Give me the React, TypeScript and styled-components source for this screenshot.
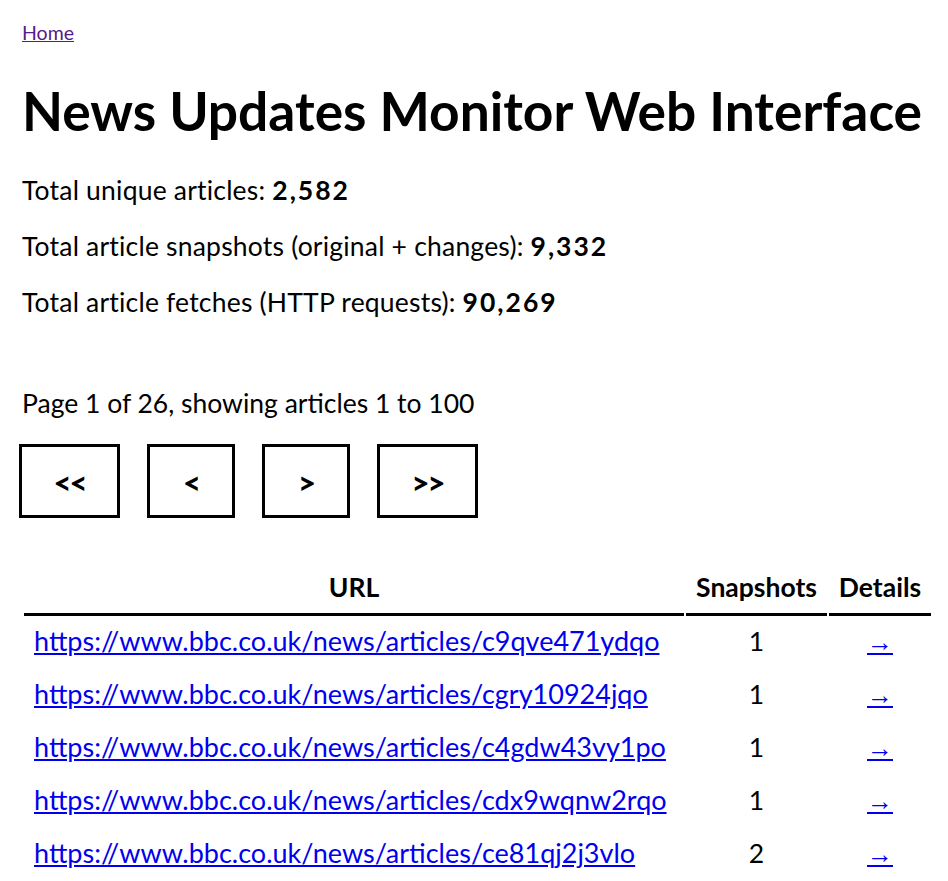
import React from "react";
import styled, { createGlobalStyle } from "styled-components";

const GlobalStyle = createGlobalStyle`
  html, body { margin: 0; padding: 0; background: #ffffff; }
  body {
    font-family: Lato, "Open Sans", sans-serif;
    color: #000000;
    font-size: 26.5px;
  }
`;

const Page = styled.main`
  padding: 21px 8px 40px 22px;
  display: flex;
  flex-direction: column;
  align-items: flex-start;
`;

const HomeLink = styled.a`
  font-size: 19.5px;
  line-height: 24px;
  color: #551a8b;
  text-decoration: underline;
`;

const Title = styled.h1`
  margin: 33px 0 0 0;
  font-size: 53.3px;
  line-height: 64px;
  font-weight: 700;
`;

const Stats = styled.div`
  margin-top: 32px;
  display: flex;
  flex-direction: column;
  gap: 24px;
`;

const Stat = styled.p`
  margin: 0;
  line-height: 32px;
  letter-spacing: 0.2px;
`;

const Value = styled.strong`
  font-weight: 700;
  letter-spacing: 2px;
`;

const PageInfo = styled.p`
  margin: 69px 0 0 0;
  line-height: 32px;
`;

const Pager = styled.nav`
  margin: 25px 0 0 -3px;
  display: flex;
  gap: 27px;
`;

const PagerButton = styled.a<{ $wide?: boolean }>`
  box-sizing: border-box;
  height: 74px;
  width: ${(p) => (p.$wide ? "101px" : "88px")};
  border: 3px solid #000000;
  background: #ffffff;
  display: flex;
  align-items: center;
  justify-content: center;
  font-weight: 900;
  font-size: 31px;
  color: #000000;
  text-decoration: none;
  letter-spacing: -2px;
  padding-top: 2px;
`;

const Table = styled.table`
  margin: 43px 0 0 0;
  width: 911px;
  border-collapse: separate;
  border-spacing: 2px;
  table-layout: fixed;
`;

const HeadCell = styled.th<{ $w: number }>`
  width: ${(p) => p.$w}px;
  box-sizing: border-box;
  padding: 8px 4px 10px 4px;
  line-height: 32px;
  font-weight: 700;
  text-align: center;
  border-bottom: 3px solid #000000;
  white-space: nowrap;
`;

const Cell = styled.td<{ $align?: string }>`
  height: 50px;
  box-sizing: border-box;
  padding: 7px 10px 11px 10px;
  font-size: 26.5px;
  line-height: 32px;
  text-align: ${(p) => p.$align || "center"};
  white-space: nowrap;
  vertical-align: top;
`;

const UrlLink = styled.a`
  color: #0000ee;
  text-decoration: underline;
  font-size: 27px;
  line-height: 32px;
`;

const ArrowLink = styled.a`
  color: #0000ee;
  text-decoration: underline;
  font-family: "Liberation Sans", sans-serif;
  font-size: 26px;
  line-height: 32px;
`;

const rows = [
  { id: "c9qve471ydqo", n: 1 },
  { id: "cgry10924jqo", n: 1 },
  { id: "c4gdw43vy1po", n: 1 },
  { id: "cdx9wqnw2rqo", n: 1 },
  { id: "ce81qj2j3vlo", n: 2 },
];

export default function App() {
  return (
    <>
      <GlobalStyle />
      <Page>
        <HomeLink href="#">Home</HomeLink>
        <Title>News Updates Monitor Web Interface</Title>
        <Stats>
          <Stat>
            Total unique articles: <Value>2,582</Value>
          </Stat>
          <Stat>
            Total article snapshots (original + changes): <Value>9,332</Value>
          </Stat>
          <Stat>
            Total article fetches (HTTP requests): <Value>90,269</Value>
          </Stat>
        </Stats>
        <PageInfo>Page 1 of 26, showing articles 1 to 100</PageInfo>
        <Pager>
          <PagerButton $wide href="#">&lt;&lt;</PagerButton>
          <PagerButton href="#">&lt;</PagerButton>
          <PagerButton href="#">&gt;</PagerButton>
          <PagerButton $wide href="#">&gt;&gt;</PagerButton>
        </Pager>
        <Table>
          <thead>
            <tr>
              <HeadCell $w={660}>URL</HeadCell>
              <HeadCell $w={141}>Snapshots</HeadCell>
              <HeadCell $w={102}>Details</HeadCell>
            </tr>
          </thead>
          <tbody>
            {rows.map((r) => (
              <tr key={r.id}>
                <Cell $align="left">
                  <UrlLink href="#">https://www.bbc.co.uk/news/articles/{r.id}</UrlLink>
                </Cell>
                <Cell>{r.n}</Cell>
                <Cell>
                  <ArrowLink href="#">→</ArrowLink>
                </Cell>
              </tr>
            ))}
          </tbody>
        </Table>
      </Page>
    </>
  );
}
